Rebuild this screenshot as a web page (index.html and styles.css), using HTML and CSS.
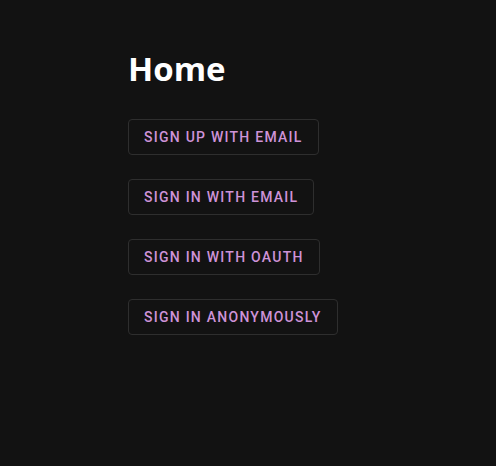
FILE: index.html
```html
<!DOCTYPE html>
<html>
<head>
  <title>Home</title>
  <meta charset="UTF-8"/>
  <link rel="stylesheet" href="styles.css">
</head>
<body>
  <div class="page">
    <h1 class="title">Home</h1>
    <div class="actions">
      <button type="button" class="btn">Sign up with email</button>
      <button type="button" class="btn">Sign in with email</button>
      <button type="button" class="btn">Sign in with OAuth</button>
      <button type="button" class="btn">Sign in anonymously</button>
    </div>
  </div>
</body>
</html>
```
FILE: styles.css
```css
body, html {
    margin: 0;
    height: 100%;
    background-color: #121212;
    color: #fff;
    font-family: Roboto, "Noto Sans", sans-serif;
}
.page {
    padding: 49px 0 0 128px;
}
.title {
    margin: 0 0 30px 0;
    font-family: "Open Sans", "Noto Sans", sans-serif;
    font-size: 33px;
    font-weight: 700;
    line-height: 40px;
}
.actions {
    display: flex;
    flex-direction: column;
    align-items: flex-start;
    gap: 24px;
}
.btn {
    background: transparent;
    color: #ce93d8;
    border: 1px solid #2e2e2e;
    border-radius: 4px;
    padding: 5px 15px;
    font-family: Roboto, sans-serif;
    font-size: 14px;
    font-weight: 500;
    line-height: 24px;
    letter-spacing: 1.25px;
    text-transform: uppercase;
    cursor: pointer;
}
```
